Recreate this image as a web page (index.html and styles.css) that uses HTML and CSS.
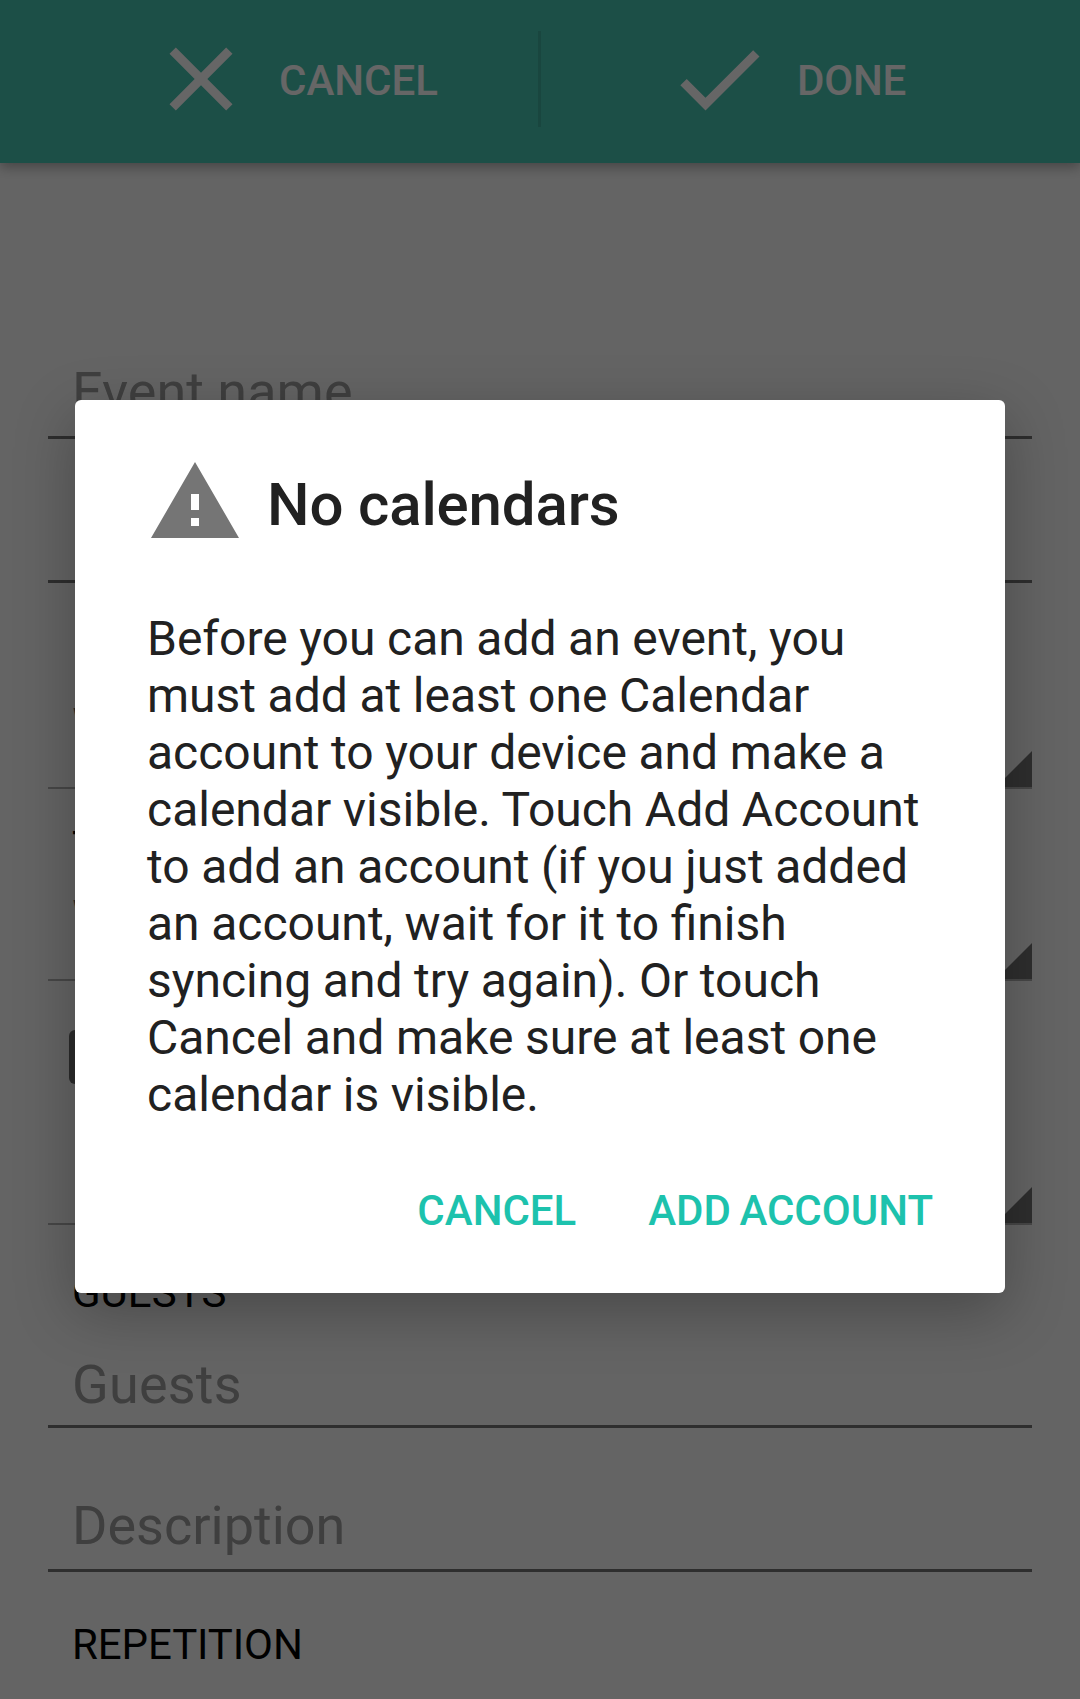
FILE: index.html
```html
<!DOCTYPE html>
<html lang="en">
<head>
<meta charset="utf-8">
<title>New event</title>
<link rel="stylesheet" href="styles.css">
</head>
<body>
<header class="bar">
  <div class="action action-cancel">
    <svg class="action-icon" viewBox="0 0 24 24"><path d="M19 6.41 17.59 5 12 10.59 6.41 5 5 6.41 10.59 12 5 17.59 6.41 19 12 13.41 17.59 19 19 17.59 13.41 12z"/></svg>
    <span>CANCEL</span>
  </div>
  <div class="divider"></div>
  <div class="action action-done">
    <svg class="action-icon" viewBox="0 0 24 24"><path d="M9 16.17 4.83 12l-1.42 1.41L9 19 21 7l-1.41-1.41z"/></svg>
    <span>DONE</span>
  </div>
</header>
<main class="form">
  <div class="field field-name">Event name</div>
  <div class="field field-location"></div>
  <div class="spinner spinner-from"><span>W</span><i class="corner"></i></div>
  <div class="label label-to">TO</div>
  <div class="spinner spinner-to"><span>W</span><i class="corner"></i></div>
  <div class="checkbox"></div>
  <div class="spinner spinner-zone"><i class="corner"></i></div>
  <div class="label label-guests">GUESTS</div>
  <div class="field field-guests">Guests</div>
  <div class="field field-description">Description</div>
  <div class="label label-repetition">REPETITION</div>
</main>
<div class="scrim">
  <section class="dialog" role="alertdialog">
    <div class="dialog-head">
      <svg class="warning" viewBox="0 0 24 24"><path d="M1 21h22L12 2 1 21zm12-3h-2v-2h2v2zm0-4h-2v-4h2v4z"/></svg>
      <h1 class="title">No calendars</h1>
    </div>
    <p class="message">Before you can add an event, you<br>must add at least one Calendar<br>account to your device and make a<br>calendar visible. Touch Add Account<br>to add an account (if you just added<br>an account, wait for it to finish<br>syncing and try again). Or touch<br>Cancel and make sure at least one<br>calendar is visible.</p>
    <div class="buttons">
      <span>CANCEL</span>
      <span>ADD ACCOUNT</span>
    </div>
  </section>
</div>
</body>
</html>
```
FILE: styles.css
```css
* { box-sizing: border-box; }
body {
  margin: 0;
  height: 1699px;
  overflow: hidden;
  background: #fafafa;
  font-family: Roboto, "Liberation Sans", sans-serif;
}
.bar {
  position: relative;
  display: flex;
  height: 163px;
  background: #46c5b1;
  box-shadow: 0 4px 12px rgba(0, 0, 0, .32);
  color: #fff;
  font-size: 42px;
  font-weight: 500;
  line-height: 50px;
}
.action {
  display: flex;
  align-items: center;
  gap: 24px;
  height: 158px;
}
.action-cancel { width: 538px; padding-left: 147px; }
.action-done { padding-left: 124px; letter-spacing: -.2px; }
.action span { padding-top: 3px; }
.action-icon { width: 108px; height: 108px; fill: #fff; }
.divider { width: 3px; height: 96px; margin-top: 31px; background: #3fb09e; }

.form { display: flex; flex-direction: column; padding: 0 48px; }
.field {
  display: flex;
  align-items: flex-end;
  padding: 0 24px 12px;
  border-bottom: 3px solid #737373;
  color: #9d9d9d;
  font-size: 54px;
  line-height: 63px;
}
.field-name { height: 276px; padding-bottom: 13px; }
.field-location { height: 144px; }
.spinner {
  display: flex;
  align-items: flex-end;
  padding-left: 24px;
  border-bottom: 2px solid #b2b2b2;
  color: #6e6e6e;
  font-size: 48px;
  line-height: 56px;
}
.spinner span { padding-bottom: 33px; }
.spinner-from { height: 206px; }
.corner {
  width: 36px;
  height: 36px;
  margin-left: auto;
  background: #737373;
  clip-path: polygon(100% 0, 100% 100%, 0 100%);
}
.label { padding-left: 24px; color: #000; font-size: 42px; line-height: 50px; }
.label-to { margin-top: 33px; }
.spinner-to { height: 109px; }
.checkbox { width: 54px; height: 54px; margin: 49px 0 0 21px; border-radius: 6px; background: #6c6c6c; }
.spinner-zone { height: 141px; }
.label-guests { margin-top: 43px; }
.field-guests { height: 110px; padding-bottom: 9px; letter-spacing: .2px; }
.field-description { height: 144px; }
.label-repetition { margin-top: 48px; letter-spacing: -.1px; }

.scrim {
  position: absolute;
  inset: 0;
  display: flex;
  justify-content: center;
  align-items: flex-start;
  padding-top: 400px;
  background: rgba(0, 0, 0, .6);
}
.dialog {
  width: 930px;
  height: 893px;
  padding: 54px 72px 0;
  border-radius: 6px;
  background: #fff;
  box-shadow: 0 18px 60px rgba(0, 0, 0, .28);
  color: #212121;
}
.dialog-head { display: flex; align-items: center; gap: 24px; height: 96px; }
.warning { width: 96px; height: 96px; fill: #757575; }
.title { margin: 6px 0 0; font-size: 60px; font-weight: 500; line-height: 70px; letter-spacing: -.15px; }
.message { margin: 60px 0 0; font-size: 48px; line-height: 57px; word-spacing: -.35px; white-space: nowrap; }
.buttons {
  display: flex;
  justify-content: flex-end;
  gap: 72px;
  margin-top: 63px;
  color: #1dc2ad;
  font-size: 42px;
  font-weight: 500;
  line-height: 50px;
  word-spacing: -2px;
}
```
